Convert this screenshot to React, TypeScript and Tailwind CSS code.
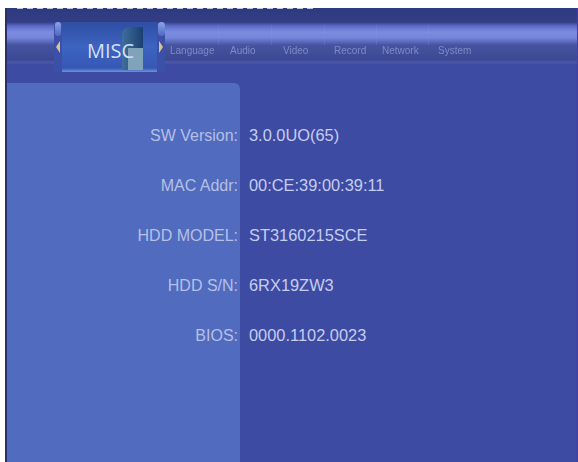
import React from 'react';

const rows = [
  { label: 'SW Version:', value: '3.0.0UO(65)' },
  { label: 'MAC Addr:', value: '00:CE:39:00:39:11' },
  { label: 'HDD MODEL:', value: 'ST3160215SCE' },
  { label: 'HDD S/N:', value: '6RX19ZW3' },
  { label: 'BIOS:', value: '0000.1102.0023' },
];

const tabs = [
  { name: 'Language', width: 'w-[60px]' },
  { name: 'Audio', width: 'w-[53px]' },
  { name: 'Video', width: 'w-[51px]' },
  { name: 'Record', width: 'w-[48px]' },
  { name: 'Network', width: 'w-[56px]' },
  { name: 'System', width: 'w-[40px]' },
];

const Arrow: React.FC<{ flip?: boolean }> = ({ flip }) => (
  <svg width="4" height="12" viewBox="0 0 4 12" className={flip ? 'rotate-180' : ''}>
    <path d="M4 0 L0 6 L4 12 Z" fill="#d8c48c" />
  </svg>
);

const App: React.FC = () => {
  return (
    <div className="w-[578px] h-[462px] bg-white pt-2 pl-[5px] overflow-hidden font-['Liberation_Sans',Arial,sans-serif]">
      <div className="relative w-[573px] h-[454px] flex flex-col bg-[#3e4ba3] border-l-2 border-l-[#2a3166] border-r border-r-[#4a3aa8]">
        {/* Header band */}
        <div className="relative h-[56px] shrink-0 bg-[linear-gradient(to_bottom,#2e3a80_0px,#333d84_14px,#5c6cc8_18px,#7c8de0_24px,#7384da_30px,#46539f_37px,#3c4894_52px,#4a57a8_54px,#4350a6_56px)]">
          {/* torn top edge */}
          <div className="absolute left-[10px] top-0 w-[300px] h-[1px] bg-[repeating-linear-gradient(to_right,#ffffff_0px,#ffffff_6px,#2e3a80_6px,#2e3a80_10px)] opacity-70" />
          <div className="absolute left-[211px] top-[17px] w-[1px] h-[20px] bg-[#8e9ce4]/20" />
          <div className="absolute left-[264px] top-[17px] w-[1px] h-[20px] bg-[#8e9ce4]/20" />
          <div className="absolute left-[317px] top-[17px] w-[1px] h-[20px] bg-[#8e9ce4]/20" />
          <div className="absolute left-[369px] top-[17px] w-[1px] h-[20px] bg-[#8e9ce4]/20" />
          <div className="absolute left-[421px] top-[17px] w-[1px] h-[20px] bg-[#8e9ce4]/20" />
          <div className="flex pl-[163px] pt-[36px] text-[10px] leading-[13px] text-[#7f8ac6] blur-[0.4px]">
            {tabs.map((tab) => (
              <div key={tab.name} className={tab.width}>
                {tab.name}
              </div>
            ))}
          </div>
        </div>

        {/* Selected tab */}
        <div className="absolute left-[47px] top-[14px] w-[111px] h-[50px] flex items-center justify-between">
          <div className="flex flex-col items-center h-full w-[8px] bg-[#3d50a8] rounded-sm">
            <div className="w-[6px] h-[14px] bg-[linear-gradient(to_bottom,#8aa4ea,#5068c0)] rounded-sm" />
            <div className="mt-[5px]"><Arrow /></div>
          </div>
          <div className="relative flex-1 h-full pt-[16px] pl-[25px] bg-[linear-gradient(to_bottom,#2f4ea4,#3d64c0_50%,#3558b4_92%,#6f92dc)] text-[20px] leading-[26px] text-[#d6dff8] font-['Open_Sans',sans-serif]">
            <div className="absolute left-[60px] top-[5px] w-[21px] h-[43px] rounded-tl-[8px] bg-[linear-gradient(to_right,#3f6f9c,#1c3f70)]" />
            <div className="absolute left-[66px] top-[26px] w-[15px] h-[22px] bg-[#7fa3b8]" />
            <span className="relative">MISC</span>
          </div>
          <div className="flex flex-col items-center h-full w-[8px] bg-[#3d50a8] rounded-sm">
            <div className="w-[7px] h-[14px] bg-[linear-gradient(to_bottom,#8aa4ea,#5068c0)] rounded-sm" />
            <div className="mt-[5px]"><Arrow flip /></div>
          </div>
        </div>

        {/* Body */}
        <div className="flex flex-1 pt-[19px]">
          <div className="w-[233px] shrink-0 bg-[#516bbf] rounded-tr-[6px] pt-[43px] pr-[2px] flex flex-col gap-[31px] items-end">
            {rows.map((row) => (
              <div key={row.label} className="h-[19px] text-[16px] leading-[19px] text-[#b5c0e6]">
                {row.label}
              </div>
            ))}
          </div>
          <div className="flex-1 pt-[43px] pl-[9px] flex flex-col gap-[31px]">
            {rows.map((row) => (
              <div key={row.value} className="h-[19px] text-[16.4px] leading-[19px] text-[#c5cdf0]">
                {row.value}
              </div>
            ))}
          </div>
        </div>
      </div>
    </div>
  );
};

export default App;
